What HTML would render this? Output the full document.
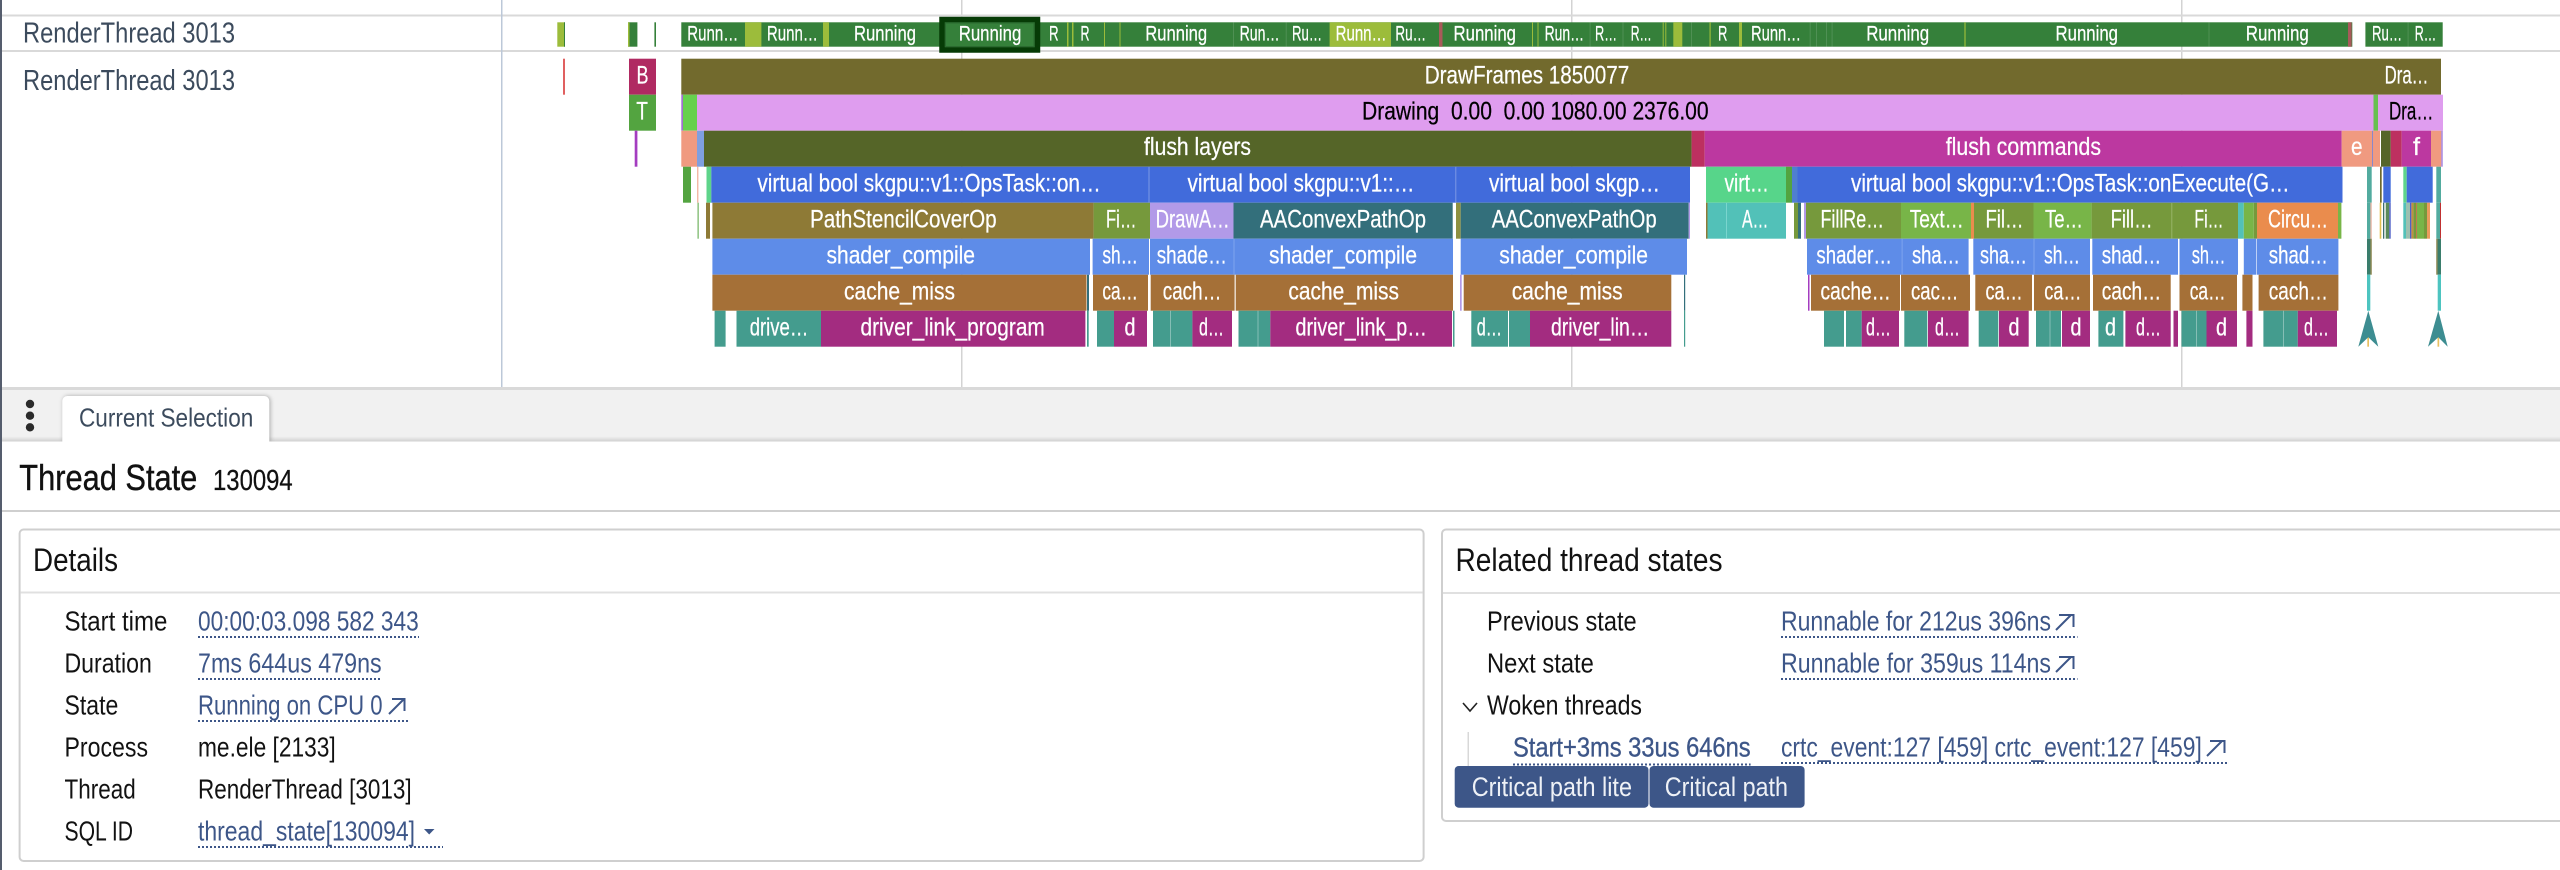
<!DOCTYPE html>
<html lang="en">
<head>
<meta charset="utf-8">
<title>Thread State</title>
<style>
html,body{margin:0;padding:0;background:#fff;width:2560px;height:870px;overflow:hidden}
svg{display:block}
text{font-family:"Liberation Sans",sans-serif;white-space:pre}
.a text{fill:#fff;font-size:21.5px;stroke:#fff;stroke-width:.25px}
.b text{fill:#fff;font-size:25px;stroke:#fff;stroke-width:.25px}
.b text.k{fill:#000;stroke:#000}
.d text{fill:#121212;font-size:27.5px}
.d text.l{fill:#3d5688}
.u{stroke:#3d5688;stroke-width:2;stroke-dasharray:2 2;fill:none}
.ar{stroke:#3d5688;stroke-width:2;fill:none}
</style>
</head>
<body>
<svg width="2560" height="870" viewBox="0 0 2560 870" xmlns="http://www.w3.org/2000/svg">
<defs>
<linearGradient id="sh" x1="0" y1="0" x2="0" y2="1"><stop offset="0" stop-color="#f1f1f1"/><stop offset="1" stop-color="#cfcfcf"/></linearGradient>
</defs>
<rect width="2560" height="870" fill="#fff"/>
<!-- grid -->
<g fill="#d3d3d3">
<rect x="961" y="0" width="1.5" height="387"/>
<rect x="1571" y="0" width="1.5" height="387"/>
<rect x="2181" y="0" width="1.5" height="387"/>
</g>
<rect x="0" y="14.5" width="2560" height="2" fill="#d9d9d9"/>
<rect x="0" y="50" width="2560" height="2" fill="#d9d9d9"/>
<rect x="501" y="0" width="1.5" height="387" fill="#bcc8d8"/>
<!-- track labels -->
<text x="23" y="42.3" font-size="29" fill="#3c4b5d" textLength="212" lengthAdjust="spacingAndGlyphs">RenderThread 3013</text>
<text x="23" y="90" font-size="29" fill="#3c4b5d" textLength="212" lengthAdjust="spacingAndGlyphs">RenderThread 3013</text>

<!-- thread state row -->
<g fill="#35803a">
<rect x="557.3" y="22.3" width="7.7" height="24.4" fill="#9cbc3b"/>
<rect x="564" y="22.3" width="1" height="24.4"/>
<rect x="628" y="22.3" width="9.4" height="24.4"/>
<rect x="628" y="22.3" width="1.5" height="24.4" fill="#9cbc3b"/>
<rect x="654.4" y="22.3" width="1.6" height="24.4"/>
<rect x="681.3" y="22.3" width="1671" height="24.4"/>
<rect x="2365.4" y="22.3" width="77.3" height="24.4"/>
</g>
<g fill="#9cbc3b">
<rect x="745" y="22.3" width="16.4" height="24.4"/>
<rect x="823" y="22.3" width="6" height="24.4"/>
<rect x="1067" y="22.3" width="1.5" height="24.4"/>
<rect x="1072" y="22.3" width="1.5" height="24.4"/>
<rect x="1104" y="22.3" width="1" height="24.4"/>
<rect x="1119.5" y="22.3" width="1" height="24.4"/>
<rect x="1329.6" y="22.3" width="61.4" height="24.4"/>
<rect x="1532" y="22.3" width="1" height="24.4"/>
<rect x="1537.5" y="22.3" width="1" height="24.4"/>
<rect x="1662.7" y="22.3" width="1" height="24.4"/>
<rect x="1665.3" y="22.3" width="1" height="24.4"/>
<rect x="1673.3" y="22.3" width="9" height="24.4"/>
<rect x="1709.5" y="22.3" width="1.2" height="24.4"/>
<rect x="1739" y="22.3" width="3" height="24.4"/>
<rect x="1964.4" y="22.3" width="1.2" height="24.4"/>
</g>
<g fill="#fff" opacity=".13">
<rect x="1233" y="22.3" width="1" height="24.4"/>
<rect x="1285.7" y="22.3" width="1" height="24.4"/>
<rect x="1589.6" y="22.3" width="1" height="24.4"/>
<rect x="1622.5" y="22.3" width="1" height="24.4"/>
<rect x="1691" y="22.3" width="1" height="24.4"/>
<rect x="1809.7" y="22.3" width="1" height="24.4"/>
<rect x="1816" y="22.3" width="1" height="24.4"/>
<rect x="1826" y="22.3" width="1" height="24.4"/>
<rect x="1831.6" y="22.3" width="1" height="24.4"/>
<rect x="2208.5" y="22.3" width="1" height="24.4"/>
<rect x="2407.6" y="22.3" width="1" height="24.4"/>
</g>
<rect x="1439" y="22.3" width="3.5" height="24.4" fill="#a85a5a"/>
<rect x="2348" y="22.3" width="3.6" height="24.4" fill="#a85a5a"/>
<rect x="942" y="19.5" width="95.5" height="30.5" fill="#35803a" stroke="#063b06" stroke-width="5.5"/>
<rect x="945.5" y="23" width="88.5" height="23.5" fill="none" stroke="#2b6a30" stroke-width="1"/>
<g class="a">
<text x="687.3" y="40.7" textLength="51" lengthAdjust="spacingAndGlyphs">Runn…</text>
<text x="766.9" y="40.7" textLength="51" lengthAdjust="spacingAndGlyphs">Runn…</text>
<text x="854" y="40.7" textLength="62" lengthAdjust="spacingAndGlyphs">Running</text>
<text x="958.7" y="40.7" textLength="62.6" lengthAdjust="spacingAndGlyphs">Running</text>
<text x="1049" y="40.7" textLength="9.6" lengthAdjust="spacingAndGlyphs">R</text>
<text x="1080.5" y="40.7" textLength="9" lengthAdjust="spacingAndGlyphs">R</text>
<text x="1145.2" y="40.7" textLength="62" lengthAdjust="spacingAndGlyphs">Running</text>
<text x="1239.6" y="40.7" textLength="40" lengthAdjust="spacingAndGlyphs">Run…</text>
<text x="1292" y="40.7" textLength="30" lengthAdjust="spacingAndGlyphs">Ru…</text>
<text x="1335.6" y="40.7" textLength="51" lengthAdjust="spacingAndGlyphs">Runn…</text>
<text x="1395.4" y="40.7" textLength="30.6" lengthAdjust="spacingAndGlyphs">Ru…</text>
<text x="1453.5" y="40.7" textLength="62.5" lengthAdjust="spacingAndGlyphs">Running</text>
<text x="1544.6" y="40.7" textLength="39.4" lengthAdjust="spacingAndGlyphs">Run…</text>
<text x="1595" y="40.7" textLength="22" lengthAdjust="spacingAndGlyphs">R…</text>
<text x="1630.7" y="40.7" textLength="21" lengthAdjust="spacingAndGlyphs">R…</text>
<text x="1718" y="40.7" textLength="9.4" lengthAdjust="spacingAndGlyphs">R</text>
<text x="1751" y="40.7" textLength="50" lengthAdjust="spacingAndGlyphs">Runn…</text>
<text x="1866.2" y="40.7" textLength="63" lengthAdjust="spacingAndGlyphs">Running</text>
<text x="2055.5" y="40.7" textLength="62.5" lengthAdjust="spacingAndGlyphs">Running</text>
<text x="2245.8" y="40.7" textLength="63" lengthAdjust="spacingAndGlyphs">Running</text>
<text x="2372" y="40.7" textLength="30" lengthAdjust="spacingAndGlyphs">Ru…</text>
<text x="2414.7" y="40.7" textLength="21.5" lengthAdjust="spacingAndGlyphs">R…</text>
</g>

<!-- row 1 -->
<rect x="563" y="58.7" width="2" height="36" fill="#e06060"/>
<rect x="629" y="58.7" width="27" height="36" fill="#b02a62"/>
<rect x="681.3" y="58.7" width="1759.7" height="36" fill="#726a2d"/>
<!-- row 2 -->
<rect x="629" y="94.7" width="27" height="36" fill="#53a440"/>
<rect x="681.3" y="94.7" width="1.7" height="36" fill="#a06fd0"/>
<rect x="683" y="94.7" width="14" height="36" fill="#66d14d"/>
<rect x="697" y="94.7" width="1746" height="36" fill="#df9def"/>
<rect x="2373.5" y="94.7" width="4.5" height="36" fill="#66c050"/>
<!-- row 3 -->
<rect x="634.7" y="130.7" width="2.7" height="36" fill="#a43cc0"/>
<rect x="681.3" y="130.7" width="15.7" height="36" fill="#f09a80"/>
<rect x="697" y="130.7" width="7" height="36" fill="#7f9fe0"/>
<rect x="704" y="130.7" width="987.6" height="36" fill="#556528"/>
<rect x="1691.6" y="130.7" width="13.1" height="36" fill="#bd3060"/>
<rect x="1704.7" y="130.7" width="637" height="36" fill="#bc38a0"/>
<rect x="2341.7" y="130.7" width="30.6" height="36" fill="#f09a80"/>
<rect x="2372.3" y="130.7" width=".8" height="36" fill="#5a70d8"/>
<rect x="2373" y="130.7" width="7" height="36" fill="#f09a80"/>
<rect x="2381" y="130.7" width="9.7" height="36" fill="#556528"/>
<rect x="2390.7" y="130.7" width="11" height="36" fill="#bd3060"/>
<rect x="2401.7" y="130.7" width="29.3" height="36" fill="#bc38a0"/>
<rect x="2431" y="130.7" width="10.3" height="36" fill="#f09a80"/>
<rect x="2441.3" y="130.7" width="1.4" height="36" fill="#a080e0"/>
<!-- row 4 -->
<rect x="683" y="166.7" width="8" height="36" fill="#53a440"/>
<rect x="697.3" y="166.7" width="1" height="36" fill="#f09a80"/>
<rect x="706.5" y="166.7" width="4.8" height="36" fill="#5ed48a"/>
<rect x="711.3" y="166.7" width="978.7" height="36" fill="#416bdb"/>
<rect x="1148.5" y="166.7" width="1" height="36" fill="#7b98e6"/>
<rect x="1455.3" y="166.7" width="1" height="36" fill="#7b98e6"/>
<rect x="1706" y="166.7" width="80" height="36" fill="#57d58a"/>
<rect x="1786" y="166.7" width="6" height="36" fill="#53a440"/>
<rect x="1792" y="166.7" width="5.5" height="36" fill="#4f7fd0"/>
<rect x="1797.5" y="166.7" width="545" height="36" fill="#416bdb"/>
<rect x="2367" y="166.7" width="4.7" height="36" fill="#52ab9f"/>
<rect x="2380" y="166.7" width="1.7" height="36" fill="#6e6a2d"/>
<rect x="2383.3" y="166.7" width="7.4" height="36" fill="#416bdb"/>
<rect x="2403.3" y="166.7" width="3.4" height="36" fill="#5ed48a"/>
<rect x="2406.7" y="166.7" width="26" height="36" fill="#416bdb"/>
<rect x="2436.3" y="166.7" width="4.7" height="36" fill="#52ab9f"/>
<!-- row 5 -->
<rect x="697.6" y="202.7" width="1" height="36" fill="#53a440"/>
<rect x="706" y="202.7" width="4" height="36" fill="#8e7a36"/>
<rect x="712.4" y="202.7" width="381.2" height="36" fill="#8e7a36"/>
<rect x="1093.6" y="202.7" width="56.4" height="36" fill="#76993c"/>
<rect x="1150" y="202.7" width="83.5" height="36" fill="#b29ae8"/>
<rect x="1233.5" y="202.7" width="219.2" height="36" fill="#336f7b"/>
<rect x="1456" y="202.7" width="4.7" height="36" fill="#8e9040"/>
<rect x="1460.7" y="202.7" width="228" height="36" fill="#336f7b"/>
<rect x="1688.7" y="202.7" width="1.3" height="36" fill="#b29ae8"/>
<rect x="1706" y="202.7" width="1.5" height="36" fill="#8e7a36"/>
<rect x="1707.5" y="202.7" width="78.5" height="36" fill="#52c1b8"/>
<rect x="1726" y="202.7" width="1" height="36" fill="#7ad5ce"/>
<rect x="1794" y="202.7" width="4" height="36" fill="#76993c"/>
<rect x="1798" y="202.7" width="3" height="36" fill="#336f7b"/>
<rect x="1804" y="202.7" width="2" height="36" fill="#b29ae8"/>
<rect x="1806" y="202.7" width="95" height="36" fill="#76993c"/>
<rect x="1901" y="202.7" width="70" height="36" fill="#78b548"/>
<rect x="1971" y="202.7" width="3" height="36" fill="#ea8c4d"/>
<rect x="1974" y="202.7" width="59.5" height="36" fill="#76993c"/>
<rect x="2033.5" y="202.7" width="58.1" height="36" fill="#78b548"/>
<rect x="2091.6" y="202.7" width="79.8" height="36" fill="#76993c"/>
<rect x="2171.4" y="202.7" width="66.6" height="36" fill="#76993c"/>
<rect x="2171.4" y="202.7" width="1" height="36" fill="#8fae5c"/>
<rect x="2238" y="202.7" width="5.8" height="36" fill="#52c1b8"/>
<rect x="2243.8" y="202.7" width="10" height="36" fill="#78b548"/>
<rect x="2253.8" y="202.7" width="3.2" height="36" fill="#76993c"/>
<rect x="2257" y="202.7" width="81" height="36" fill="#ea8c4d"/>
<rect x="2338" y="202.7" width="3.4" height="36" fill="#78b548"/>
<rect x="2367" y="202.7" width="3.4" height="36" fill="#52ab9f"/>
<rect x="2370.4" y="202.7" width="1.3" height="36" fill="#e8b0a0"/>
<rect x="2379.7" y="202.7" width="1.6" height="36" fill="#e0c050"/>
<rect x="2383" y="202.7" width="1.3" height="36" fill="#3d6d6d"/>
<rect x="2385.7" y="202.7" width="3.6" height="36" fill="#5a8a5a"/>
<rect x="2389.3" y="202.7" width="1.4" height="36" fill="#5060c8"/>
<rect x="2403.3" y="202.7" width="2.7" height="36" fill="#52c1b8"/>
<rect x="2406" y="202.7" width="4" height="36" fill="#9cc0b0"/>
<rect x="2410" y="202.7" width="1.4" height="36" fill="#5060c8"/>
<rect x="2411.4" y="202.7" width="2" height="36" fill="#c09040"/>
<rect x="2413.4" y="202.7" width="2.6" height="36" fill="#76993c"/>
<rect x="2416" y="202.7" width="1" height="36" fill="#c07a50"/>
<rect x="2417" y="202.7" width="7" height="36" fill="#78b548"/>
<rect x="2424" y="202.7" width="3" height="36" fill="#76993c"/>
<rect x="2427" y="202.7" width="3" height="36" fill="#ea9c5d"/>
<rect x="2436.3" y="202.7" width="3.7" height="36" fill="#52ab9f"/>
<rect x="2440" y="202.7" width="1" height="36" fill="#c03030"/>
<!-- row 6 -->
<g fill="#5e8ce8">
<rect x="712.4" y="238.7" width="377.6" height="36"/>
<rect x="1092.6" y="238.7" width="56.4" height="36"/>
<rect x="1150" y="238.7" width="303" height="36"/>
<rect x="1460.7" y="238.7" width="226.3" height="36"/>
<rect x="1807" y="238.7" width="161.6" height="36"/>
<rect x="1973.3" y="238.7" width="116.7" height="36"/>
<rect x="2092.3" y="238.7" width="85.7" height="36"/>
<rect x="2179.5" y="238.7" width="58.5" height="36"/>
<rect x="2243.8" y="238.7" width="12.2" height="36"/>
<rect x="2256.6" y="238.7" width="81.8" height="36"/>
</g>
<g fill="#7ea3ee">
<rect x="1233.5" y="238.7" width="1" height="36"/>
<rect x="1901.6" y="238.7" width="1" height="36"/>
<rect x="2033.5" y="238.7" width="1" height="36"/>
</g>
<rect x="2367" y="238.7" width="3.4" height="36" fill="#3a7d6c"/>
<rect x="2370.4" y="238.7" width="1.3" height="36" fill="#807a40"/>
<rect x="2436.3" y="238.7" width="1.3" height="36" fill="#807a40"/>
<rect x="2437.6" y="238.7" width="3.4" height="36" fill="#3a7d6c"/>
<!-- row 7 -->
<g fill="#a57037">
<rect x="712.4" y="274.7" width="374.1" height="36"/>
<rect x="1093" y="274.7" width="55" height="36"/>
<rect x="1150.7" y="274.7" width="83.9" height="36"/>
<rect x="1235.7" y="274.7" width="217.3" height="36"/>
<rect x="1463.7" y="274.7" width="207.6" height="36"/>
<rect x="1811" y="274.7" width="89" height="36"/>
<rect x="1901" y="274.7" width="69" height="36"/>
<rect x="1975.3" y="274.7" width="56.7" height="36"/>
<rect x="2034" y="274.7" width="56" height="36"/>
<rect x="2093" y="274.7" width="77.7" height="36"/>
<rect x="2179.5" y="274.7" width="57.5" height="36"/>
<rect x="2242.4" y="274.7" width="10.1" height="36"/>
<rect x="2258.6" y="274.7" width="79.8" height="36"/>
</g>
<rect x="1087" y="274.7" width="2" height="36" fill="#336f7b"/>
<rect x="1460" y="274.7" width="1.7" height="36" fill="#b29ae8"/>
<rect x="1684" y="274.7" width="1.2" height="36" fill="#336f7b"/>
<rect x="1808" y="274.7" width="1.5" height="36" fill="#a43cc0"/>
<rect x="2367" y="274.7" width="3.3" height="36" fill="#4dc4c0"/>
<rect x="2437.7" y="274.7" width="3.3" height="36" fill="#4dc4c0"/>
<!-- row 8 -->
<g fill="#449c8e">
<rect x="714.6" y="310.7" width="11" height="36"/>
<rect x="736.5" y="310.7" width="84.5" height="36"/>
<rect x="1087" y="310.7" width="1.7" height="36"/>
<rect x="1097" y="310.7" width="17" height="36"/>
<rect x="1153" y="310.7" width="39.4" height="36"/>
<rect x="1238.5" y="310.7" width="31.8" height="36"/>
<rect x="1453" y="310.7" width="1.5" height="36"/>
<rect x="1471.3" y="310.7" width="36.7" height="36"/>
<rect x="1509" y="310.7" width="21" height="36"/>
<rect x="1684" y="310.7" width="1.2" height="36"/>
<rect x="1824" y="310.7" width="20" height="36"/>
<rect x="1846" y="310.7" width="15.7" height="36"/>
<rect x="1904.3" y="310.7" width="23" height="36"/>
<rect x="1978.7" y="310.7" width="19.6" height="36"/>
<rect x="2036" y="310.7" width="25" height="36"/>
<rect x="2098.4" y="310.7" width="25" height="36"/>
<rect x="2181.5" y="310.7" width="25" height="36"/>
<rect x="2263.4" y="310.7" width="34.4" height="36"/>
</g>
<g fill="#a32c80">
<rect x="821" y="310.7" width="264.4" height="36"/>
<rect x="1114" y="310.7" width="33" height="36"/>
<rect x="1192.4" y="310.7" width="39.6" height="36"/>
<rect x="1270.3" y="310.7" width="181.7" height="36"/>
<rect x="1530" y="310.7" width="141.3" height="36"/>
<rect x="1861.7" y="310.7" width="37.3" height="36"/>
<rect x="1928" y="310.7" width="40.6" height="36"/>
<rect x="1999" y="310.7" width="29.7" height="36"/>
<rect x="2062" y="310.7" width="28" height="36"/>
<rect x="2125.4" y="310.7" width="45.3" height="36"/>
<rect x="2173.5" y="310.7" width="4.5" height="36"/>
<rect x="2206.5" y="310.7" width="30.5" height="36"/>
<rect x="2246.4" y="310.7" width="6.1" height="36"/>
<rect x="2297.8" y="310.7" width="39.2" height="36"/>
</g>
<g fill="#fff" opacity=".35">
<rect x="1170" y="310.7" width="1" height="36"/>
<rect x="1257.5" y="310.7" width="1" height="36"/>
<rect x="2049.5" y="310.7" width="1" height="36"/>
<rect x="2196" y="310.7" width="1" height="36"/>
<rect x="2283" y="310.7" width="1" height="36"/>
</g>
<rect x="2367.3" y="337.5" width="1.7" height="9.2" fill="#e8c060"/>
<rect x="2437.5" y="337.5" width="1.7" height="9.2" fill="#e8c060"/>
<path d="M2368.3 310.7L2378.3 346.7L2368.3 337.3L2358.3 346.7Z" fill="#3d8d91"/>
<path d="M2438.3 310.7L2447.7 346.7L2438.3 337.3L2428 346.7Z" fill="#3d8d91"/>

<!-- slice labels -->
<g class="b">
<text x="636.5" y="83.3" textLength="12" lengthAdjust="spacingAndGlyphs">B</text>
<text x="1424.7" y="83.3" textLength="204.6" lengthAdjust="spacingAndGlyphs">DrawFrames 1850077</text>
<text x="2384.6" y="83.3" textLength="43.9" lengthAdjust="spacingAndGlyphs">Dra…</text>
<text x="636.3" y="119.3" textLength="11.7" lengthAdjust="spacingAndGlyphs">T</text>
<text class="k" x="1362" y="119.3" textLength="346.6" lengthAdjust="spacingAndGlyphs">Drawing  0.00  0.00 1080.00 2376.00</text>
<text class="k" x="2389" y="119.3" textLength="44.4" lengthAdjust="spacingAndGlyphs">Dra…</text>
<text x="1144" y="155" textLength="107" lengthAdjust="spacingAndGlyphs">flush layers</text>
<text x="1945.7" y="155" textLength="155.3" lengthAdjust="spacingAndGlyphs">flush commands</text>
<text x="2351" y="155" textLength="11.5" lengthAdjust="spacingAndGlyphs">e</text>
<text x="2413" y="155" textLength="7" lengthAdjust="spacingAndGlyphs">f</text>

<text x="757.4" y="191.7" textLength="343.4" lengthAdjust="spacingAndGlyphs">virtual bool skgpu::v1::OpsTask::on…</text>
<text x="1187.5" y="191.7" textLength="227" lengthAdjust="spacingAndGlyphs">virtual bool skgpu::v1::…</text>
<text x="1489" y="191.7" textLength="171" lengthAdjust="spacingAndGlyphs">virtual bool skgp…</text>
<text x="1724.5" y="191.7" textLength="44.5" lengthAdjust="spacingAndGlyphs">virt…</text>
<text x="1851" y="191.7" textLength="438.7" lengthAdjust="spacingAndGlyphs">virtual bool skgpu::v1::OpsTask::onExecute(G…</text>

<text x="810" y="227.7" textLength="186.6" lengthAdjust="spacingAndGlyphs">PathStencilCoverOp</text>
<text x="1106" y="227.7" textLength="30.4" lengthAdjust="spacingAndGlyphs">Fi…</text>
<text x="1155.6" y="227.7" textLength="74.1" lengthAdjust="spacingAndGlyphs">DrawA…</text>
<text x="1260" y="227.7" textLength="166" lengthAdjust="spacingAndGlyphs">AAConvexPathOp</text>
<text x="1491.7" y="227.7" textLength="165" lengthAdjust="spacingAndGlyphs">AAConvexPathOp</text>
<text x="1742" y="227.7" textLength="26.4" lengthAdjust="spacingAndGlyphs">A…</text>
<text x="1820.5" y="227.7" textLength="63.5" lengthAdjust="spacingAndGlyphs">FillRe…</text>
<text x="1909.7" y="227.7" textLength="54" lengthAdjust="spacingAndGlyphs">Text…</text>
<text x="1985.5" y="227.7" textLength="38" lengthAdjust="spacingAndGlyphs">Fil…</text>
<text x="2045" y="227.7" textLength="38" lengthAdjust="spacingAndGlyphs">Te…</text>
<text x="2110.6" y="227.7" textLength="41.9" lengthAdjust="spacingAndGlyphs">Fill…</text>
<text x="2194.4" y="227.7" textLength="29.1" lengthAdjust="spacingAndGlyphs">Fi…</text>
<text x="2268" y="227.7" textLength="60" lengthAdjust="spacingAndGlyphs">Circu…</text>

<text x="826.5" y="263.7" textLength="148.5" lengthAdjust="spacingAndGlyphs">shader_compile</text>
<text x="1102.4" y="263.7" textLength="35.6" lengthAdjust="spacingAndGlyphs">sh…</text>
<text x="1156.7" y="263.7" textLength="70.3" lengthAdjust="spacingAndGlyphs">shade…</text>
<text x="1269" y="263.7" textLength="148" lengthAdjust="spacingAndGlyphs">shader_compile</text>
<text x="1499.3" y="263.7" textLength="148.7" lengthAdjust="spacingAndGlyphs">shader_compile</text>
<text x="1816.4" y="263.7" textLength="75.6" lengthAdjust="spacingAndGlyphs">shader…</text>
<text x="1912" y="263.7" textLength="48" lengthAdjust="spacingAndGlyphs">sha…</text>
<text x="1980" y="263.7" textLength="47" lengthAdjust="spacingAndGlyphs">sha…</text>
<text x="2044" y="263.7" textLength="36" lengthAdjust="spacingAndGlyphs">sh…</text>
<text x="2101.8" y="263.7" textLength="59.4" lengthAdjust="spacingAndGlyphs">shad…</text>
<text x="2191.7" y="263.7" textLength="33.8" lengthAdjust="spacingAndGlyphs">sh…</text>
<text x="2268.8" y="263.7" textLength="59.2" lengthAdjust="spacingAndGlyphs">shad…</text>

<text x="844" y="299.7" textLength="111" lengthAdjust="spacingAndGlyphs">cache_miss</text>
<text x="1102.4" y="299.7" textLength="35.6" lengthAdjust="spacingAndGlyphs">ca…</text>
<text x="1162.8" y="299.7" textLength="58.6" lengthAdjust="spacingAndGlyphs">cach…</text>
<text x="1288.4" y="299.7" textLength="110.6" lengthAdjust="spacingAndGlyphs">cache_miss</text>
<text x="1511.7" y="299.7" textLength="111" lengthAdjust="spacingAndGlyphs">cache_miss</text>
<text x="1820.5" y="299.7" textLength="70.3" lengthAdjust="spacingAndGlyphs">cache…</text>
<text x="1911" y="299.7" textLength="47.4" lengthAdjust="spacingAndGlyphs">cac…</text>
<text x="1985.5" y="299.7" textLength="37.2" lengthAdjust="spacingAndGlyphs">ca…</text>
<text x="2044.3" y="299.7" textLength="37.2" lengthAdjust="spacingAndGlyphs">ca…</text>
<text x="2101.8" y="299.7" textLength="59.4" lengthAdjust="spacingAndGlyphs">cach…</text>
<text x="2189.7" y="299.7" textLength="35.8" lengthAdjust="spacingAndGlyphs">ca…</text>
<text x="2268.8" y="299.7" textLength="59.2" lengthAdjust="spacingAndGlyphs">cach…</text>

<text x="749.7" y="335.7" textLength="58.7" lengthAdjust="spacingAndGlyphs">drive…</text>
<text x="860.5" y="335.7" textLength="184.3" lengthAdjust="spacingAndGlyphs">driver_link_program</text>
<text x="1124.5" y="335.7" textLength="11" lengthAdjust="spacingAndGlyphs">d</text>
<text x="1199" y="335.7" textLength="25" lengthAdjust="spacingAndGlyphs">d…</text>
<text x="1295.5" y="335.7" textLength="131.5" lengthAdjust="spacingAndGlyphs">driver_link_p…</text>
<text x="1476.7" y="335.7" textLength="25.3" lengthAdjust="spacingAndGlyphs">d…</text>
<text x="1551" y="335.7" textLength="98.3" lengthAdjust="spacingAndGlyphs">driver_lin…</text>
<text x="1866" y="335.7" textLength="25" lengthAdjust="spacingAndGlyphs">d…</text>
<text x="1935" y="335.7" textLength="25" lengthAdjust="spacingAndGlyphs">d…</text>
<text x="2008.5" y="335.7" textLength="11" lengthAdjust="spacingAndGlyphs">d</text>
<text x="2070.5" y="335.7" textLength="11" lengthAdjust="spacingAndGlyphs">d</text>
<text x="2105" y="335.7" textLength="11" lengthAdjust="spacingAndGlyphs">d</text>
<text x="2136" y="335.7" textLength="25" lengthAdjust="spacingAndGlyphs">d…</text>
<text x="2216" y="335.7" textLength="11" lengthAdjust="spacingAndGlyphs">d</text>
<text x="2304" y="335.7" textLength="25" lengthAdjust="spacingAndGlyphs">d…</text>
</g>

<!-- tab bar -->
<rect x="0" y="387" width="2560" height="3" fill="#d9d9d9"/>
<rect x="0" y="390" width="2560" height="51.5" fill="#f1f1f1"/>
<rect x="0" y="436.5" width="2560" height="5" fill="url(#sh)"/>
<path d="M62.3 441.5V401a5 5 0 0 1 5-5H264.3a5 5 0 0 1 5 5V441.5Z" fill="#fff" style="filter:drop-shadow(1px 0 2px rgba(0,0,0,.3))"/>
<rect x="0" y="441.5" width="2560" height="8" fill="#fff"/>
<text x="79" y="426.7" font-size="26" fill="#3c4b5d" textLength="174.3" lengthAdjust="spacingAndGlyphs">Current Selection</text>
<g fill="#2b2b2b">
<circle cx="30" cy="404" r="4.2"/>
<circle cx="30" cy="415.7" r="4.2"/>
<circle cx="30" cy="427.3" r="4.2"/>
</g>

<!-- title -->
<text x="19.3" y="490" font-size="36" fill="#111" stroke="#111" stroke-width=".4" textLength="178" lengthAdjust="spacingAndGlyphs">Thread State</text>
<text x="213" y="490" font-size="28.5" fill="#111" stroke="#111" stroke-width=".25" textLength="79.7" lengthAdjust="spacingAndGlyphs">130094</text>
<rect x="2" y="510" width="2558" height="2" fill="#cfcfcf"/>

<!-- details box -->
<rect x="19.6" y="529.5" width="1404" height="331.5" rx="4" fill="#fff" stroke="#cfcfcf" stroke-width="2"/>
<rect x="20.6" y="591.5" width="1402" height="2" fill="#e0e0e0"/>
<text x="33" y="571" font-size="32" fill="#121212" textLength="85" lengthAdjust="spacingAndGlyphs">Details</text>
<g class="d">
<text x="64.5" y="630.7" textLength="102.9" lengthAdjust="spacingAndGlyphs">Start time</text>
<text x="64.5" y="672.7" textLength="87.3" lengthAdjust="spacingAndGlyphs">Duration</text>
<text x="64.5" y="714.7" textLength="53.8" lengthAdjust="spacingAndGlyphs">State</text>
<text x="64.5" y="756.7" textLength="83.5" lengthAdjust="spacingAndGlyphs">Process</text>
<text x="64.5" y="798.5" textLength="71.2" lengthAdjust="spacingAndGlyphs">Thread</text>
<text x="64.5" y="840.7" textLength="68.5" lengthAdjust="spacingAndGlyphs">SQL ID</text>
<text class="l" x="198" y="630.7" textLength="220.7" lengthAdjust="spacingAndGlyphs">00:00:03.098 582 343</text>
<text class="l" x="198" y="672.7" textLength="183.7" lengthAdjust="spacingAndGlyphs">7ms 644us 479ns</text>
<text class="l" x="198" y="714.7" textLength="184.6" lengthAdjust="spacingAndGlyphs">Running on CPU 0</text>
<text x="198" y="756.7" textLength="137.7" lengthAdjust="spacingAndGlyphs">me.ele [2133]</text>
<text x="198" y="798.5" textLength="213.6" lengthAdjust="spacingAndGlyphs">RenderThread [3013]</text>
<text class="l" x="198" y="840.7" textLength="217" lengthAdjust="spacingAndGlyphs">thread_state[130094]</text>
</g>
<path class="u" d="M198 637H419"/>
<path class="u" d="M198 679H382"/>
<path class="u" d="M198 721H410"/>
<path class="u" d="M198 847H443"/>
<path class="ar" d="M389 714L404 699M392 699H404.5V711"/>
<path d="M424 829H434.5L429.2 834.5Z" fill="#3d5688"/>

<!-- related box -->
<rect x="1442" y="529.5" width="1131" height="291.5" rx="4" fill="#fff" stroke="#cfcfcf" stroke-width="2"/>
<rect x="1443" y="592" width="1117" height="2" fill="#e0e0e0"/>
<text x="1455.5" y="571" font-size="32" fill="#121212" textLength="267" lengthAdjust="spacingAndGlyphs">Related thread states</text>
<g class="d">
<text x="1487" y="630.7" textLength="149.7" lengthAdjust="spacingAndGlyphs">Previous state</text>
<text x="1487" y="672.7" textLength="106.8" lengthAdjust="spacingAndGlyphs">Next state</text>
<text x="1487" y="714.7" textLength="155" lengthAdjust="spacingAndGlyphs">Woken threads</text>
<text class="l" x="1781" y="630.7" textLength="270" lengthAdjust="spacingAndGlyphs">Runnable for 212us 396ns</text>
<text class="l" x="1781" y="672.7" textLength="270" lengthAdjust="spacingAndGlyphs">Runnable for 359us 114ns</text>
<text class="l" x="1513" y="756.7" stroke="#3d5688" stroke-width=".35" textLength="237.6" lengthAdjust="spacingAndGlyphs">Start+3ms 33us 646ns</text>
<text class="l" x="1781" y="756.7" textLength="420.8" lengthAdjust="spacingAndGlyphs">crtc_event:127 [459] crtc_event:127 [459]</text>
</g>
<path d="M1463 703L1470 711L1477 703" fill="none" stroke="#222" stroke-width="1.6"/>
<rect x="1467.5" y="732" width="1.5" height="35" fill="#d8d8d8"/>
<path class="u" d="M1781 637H2077.5"/>
<path class="u" d="M1781 679H2077.5"/>
<path class="u" d="M1513 764.5H1750.6"/>
<path class="u" d="M1781 763H2228"/>
<path class="ar" d="M2056 630L2071 615M2059 615H2073.5V627"/>
<path class="ar" d="M2056 672L2071 657M2059 657H2073.5V669"/>
<path class="ar" d="M2207 756L2222 741M2210 741H2224.5V753"/>
<rect x="1454.7" y="766" width="193.8" height="41.7" rx="4" fill="#3d5688"/>
<rect x="1649.5" y="766" width="155.1" height="41.7" rx="4" fill="#3d5688"/>
<text x="1471.7" y="796" font-size="27" fill="#eef1f6" textLength="160.3" lengthAdjust="spacingAndGlyphs">Critical path lite</text>
<text x="1664.8" y="796" font-size="27" fill="#eef1f6" textLength="123.2" lengthAdjust="spacingAndGlyphs">Critical path</text>

<!-- left stripe -->
<rect x="0" y="0" width="2" height="870" fill="#555d6d"/>
</svg>
</body>
</html>
